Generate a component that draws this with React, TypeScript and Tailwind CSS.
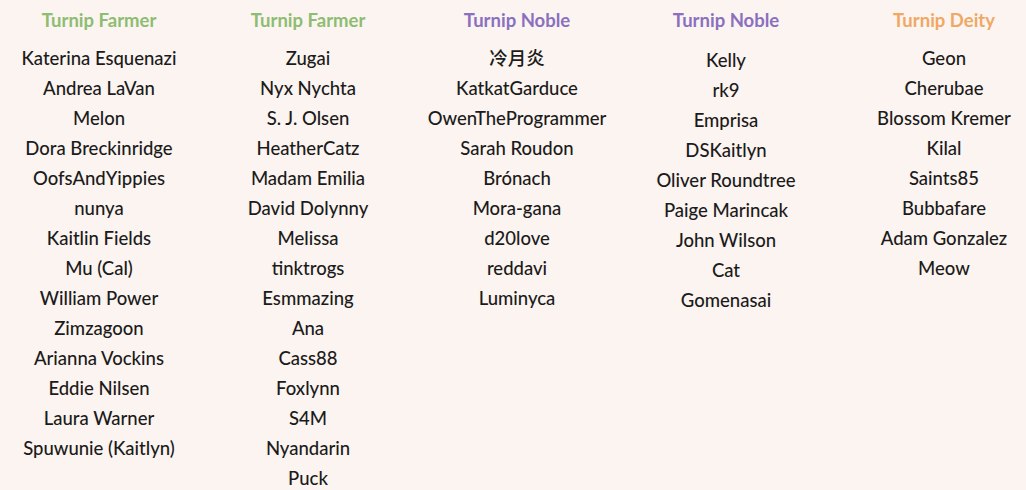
import React from "react";

const cols: { title: string; color: string; names: string[]; w: string; shift?: boolean }[] = [
  {
    title: "Turnip Farmer",
    color: "text-[#8dbd72]",
    w: "w-[198px]",
    names: [
      "Katerina Esquenazi",
      "Andrea LaVan",
      "Melon",
      "Dora Breckinridge",
      "OofsAndYippies",
      "nunya",
      "Kaitlin Fields",
      "Mu (Cal)",
      "William Power",
      "Zimzagoon",
      "Arianna Vockins",
      "Eddie Nilsen",
      "Laura Warner",
      "Spuwunie (Kaitlyn)",
    ],
  },
  {
    title: "Turnip Farmer",
    color: "text-[#8dbd72]",
    w: "w-[198px]",
    names: [
      "Zugai",
      "Nyx Nychta",
      "S. J. Olsen",
      "HeatherCatz",
      "Madam Emilia",
      "David Dolynny",
      "Melissa",
      "tinktrogs",
      "Esmmazing",
      "Ana",
      "Cass88",
      "Foxlynn",
      "S4M",
      "Nyandarin",
      "Puck",
    ],
  },
  {
    title: "Turnip Noble",
    color: "text-[#8a70bf]",
    w: "w-[198px]",
    names: [
      "冷月炎",
      "KatkatGarduce",
      "OwenTheProgrammer",
      "Sarah Roudon",
      "Brónach",
      "Mora-gana",
      "d20love",
      "reddavi",
      "Luminyca",
    ],
  },
  {
    title: "Turnip Noble",
    color: "text-[#8a70bf]",
    w: "w-[198px]",
    shift: true,
    names: [
      "Kelly",
      "rk9",
      "Emprisa",
      "DSKaitlyn",
      "Oliver Roundtree",
      "Paige Marincak",
      "John Wilson",
      "Cat",
      "Gomenasai",
    ],
  },
  {
    title: "Turnip Deity",
    color: "text-[#f0a865]",
    w: "w-[216px]",
    names: ["Geon", "Cherubae", "Blossom Kremer", "Kilal", "Saints85", "Bubbafare", "Adam Gonzalez", "Meow"],
  },
];

export default function App() {
  return (
    <div
      className="w-[1026px] h-[490px] overflow-hidden bg-[#fcf4f0] flex gap-[11px] pt-[8px]"
      style={{ fontFamily: '"Lato", "Noto Sans CJK SC", sans-serif' }}
    >
      {cols.map((c, i) => (
        <div key={i} className={`${c.w} shrink-0 flex flex-col items-center`}>
          <div className={`${c.color} font-bold text-[18.5px] leading-[24px] mb-[11px]`}>{c.title}</div>
          <div className={c.shift ? "mt-[2px] flex flex-col items-center" : "flex flex-col items-center"}>
            {c.names.map((n, j) => (
              <div key={j} className="text-[#1b1b1b] font-medium text-[18.5px] leading-[30px] whitespace-nowrap">
                {n}
              </div>
            ))}
          </div>
        </div>
      ))}
    </div>
  );
}
